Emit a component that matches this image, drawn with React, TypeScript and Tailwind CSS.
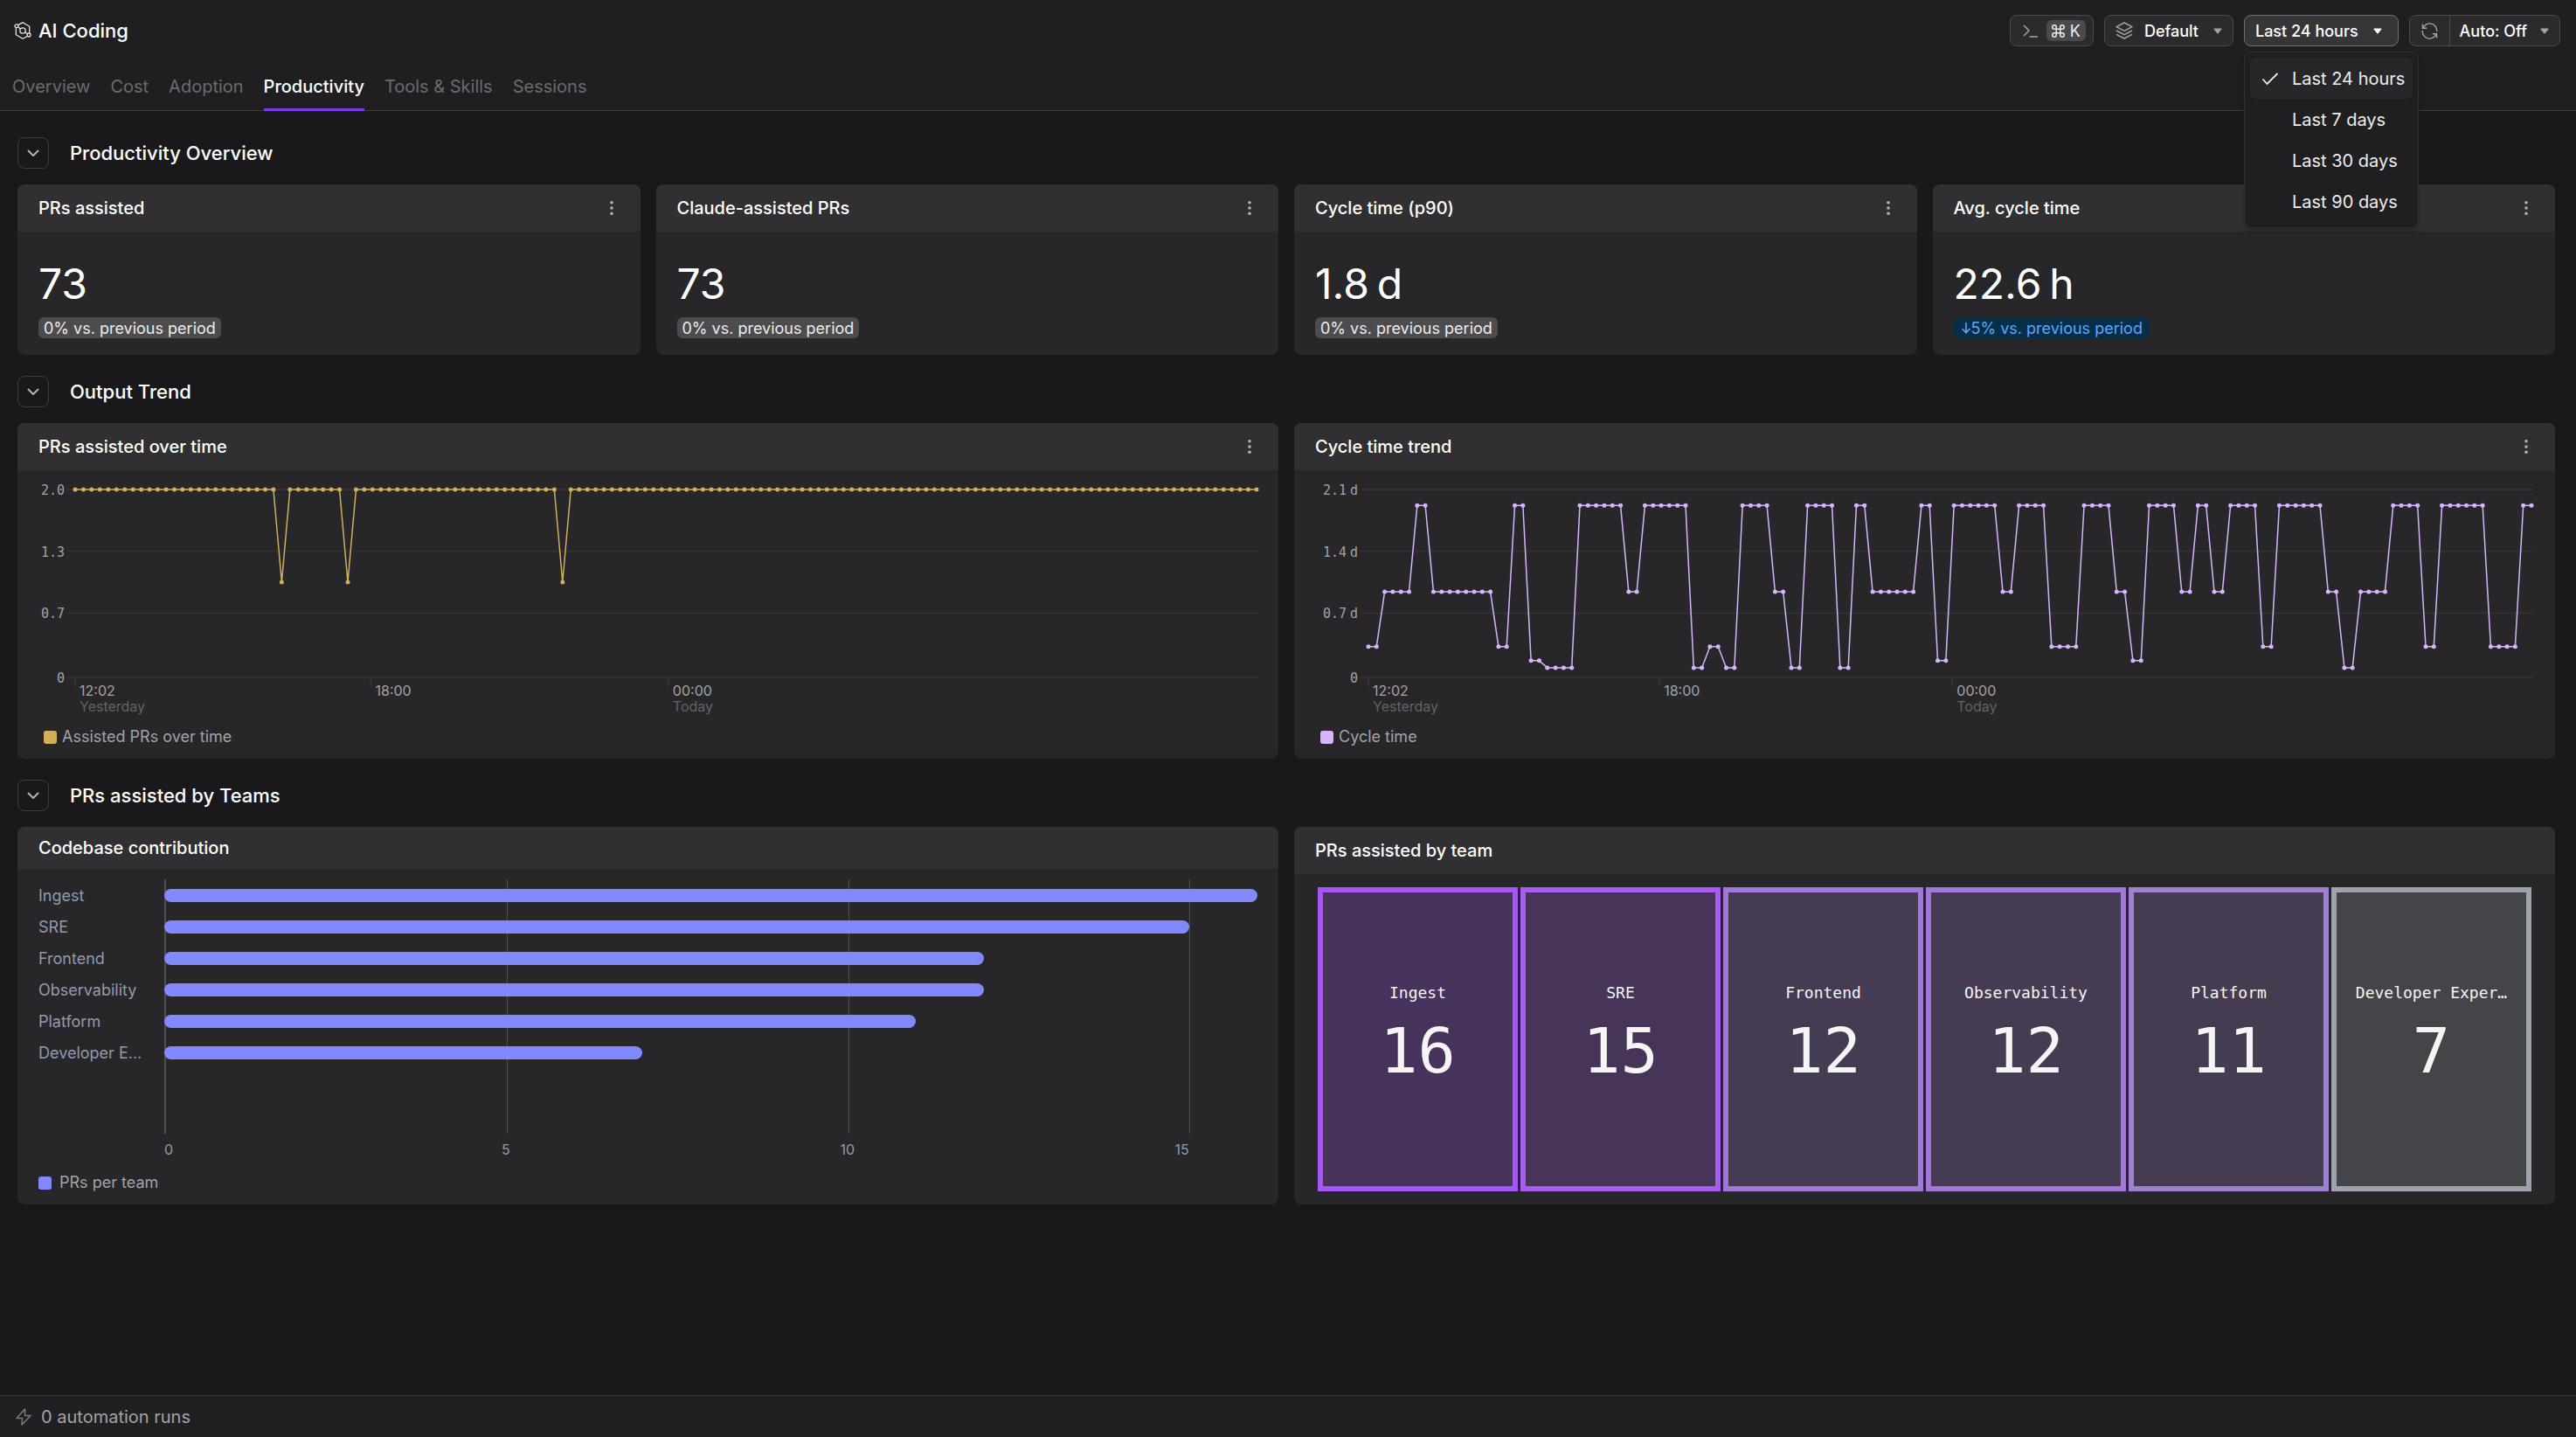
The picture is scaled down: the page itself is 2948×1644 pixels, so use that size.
import type { ReactNode } from 'react';

const TABS = ['Overview', 'Cost', 'Adoption', 'Productivity', 'Tools & Skills', 'Sessions'];
const RANGES = ['Last 24 hours', 'Last 7 days', 'Last 30 days', 'Last 90 days'];

interface Stat {
  title: string;
  value: string;
  delta: string;
  trend: 'flat' | 'down';
}

const STATS: Stat[] = [
  { title: 'PRs assisted', value: '73', delta: '0% vs. previous period', trend: 'flat' },
  { title: 'Claude-assisted PRs', value: '73', delta: '0% vs. previous period', trend: 'flat' },
  { title: 'Cycle time (p90)', value: '1.8\u2009d', delta: '0% vs. previous period', trend: 'flat' },
  { title: 'Avg. cycle time', value: '22.6\u2009h', delta: '5% vs. previous period', trend: 'down' },
];

interface Team {
  name: string;
  prs: number;
  tile: string;
}

const TEAMS: Team[] = [
  { name: 'Ingest', prs: 16, tile: 'border-[#a855f7] bg-[#47325b]' },
  { name: 'SRE', prs: 15, tile: 'border-[#a65cee] bg-[#463459]' },
  { name: 'Frontend', prs: 12, tile: 'border-[#a277d9] bg-[#453b53]' },
  { name: 'Observability', prs: 12, tile: 'border-[#a277d9] bg-[#453b53]' },
  { name: 'Platform', prs: 11, tile: 'border-[#a07ed0] bg-[#453c51]' },
  { name: 'Developer Experience', prs: 7, tile: 'border-[#9ca3af] bg-[#444548]' },
];

// [value, repeat] runs, one sample every ten minutes
const PR_RUNS: [number, number][] = [
  [2, 25], [1, 1], [2, 7], [1, 1], [2, 25], [1, 1], [2, 84],
];

const CYCLE_RUNS: [number, number][] = [
  [0.32, 2], [0.94, 4], [1.92, 2], [0.94, 8], [0.32, 2], [1.92, 2], [0.16, 2], [0.08, 4],
  [1.92, 6], [0.94, 2], [1.92, 6], [0.08, 2], [0.32, 2], [0.08, 2], [1.92, 4], [0.94, 2],
  [0.08, 2], [1.92, 4], [0.08, 2], [1.92, 2], [0.94, 6], [1.92, 2], [0.16, 2], [1.92, 6],
  [0.94, 2], [1.92, 4], [0.32, 4], [1.92, 4], [0.94, 2], [0.16, 2], [1.92, 4], [0.94, 2],
  [1.92, 2], [0.94, 2], [1.92, 4], [0.32, 2], [1.92, 6], [0.94, 2], [0.08, 2], [0.94, 4],
  [1.92, 4], [0.32, 2], [1.92, 6], [0.32, 4], [1.92, 2],
];

const X_TICKS = [
  { minute: 0, label: '12:02', day: 'Yesterday' },
  { minute: 358, label: '18:00', day: '' },
  { minute: 718, label: '00:00', day: 'Today' },
];

const expand = (runs: [number, number][]) => runs.flatMap(([v, n]) => Array<number>(n).fill(v));

/** Shortens a label so that it has at most `max` characters, dots included. */
function clip(text: string, max: number, dots: string) {
  return text.length > max ? text.slice(0, max - dots.length) + dots : text;
}

export default function App() {
  return (
    <div className="flex min-h-screen flex-col bg-[#19191b] font-['Inter',sans-serif] text-white">
      <Header />
      <main className="flex flex-1 flex-col gap-6 pt-[30px] pr-6 pb-6 pl-5">
        <Section title="Productivity Overview">
          <div className="grid grid-cols-4 gap-[18px]">
            {STATS.map((s) => (
              <StatCard key={s.title} stat={s} />
            ))}
          </div>
        </Section>
        <Section title="Output Trend">
          <div className="grid grid-cols-2 gap-[18px]">
            <Card title="PRs assisted over time" menu>
              <LineChart
                name="PRs assisted over time"
                runs={PR_RUNS}
                max={2}
                yLabels={['2.0', '1.3', '0.7', '0']}
                left={66}
                right={1418}
                color="#d1af5b"
              />
              <Legend swatch="bg-[#d1af5b]" label="Assisted PRs over time" className="gap-1.5 px-[30px] pt-px pb-[13px]" />
            </Card>
            <Card title="Cycle time trend" menu>
              <LineChart
                name="Cycle time trend"
                runs={CYCLE_RUNS}
                max={2.1}
                yLabels={['2.1', '1.4', '0.7', '0']}
                unit="d"
                left={85}
                right={1416}
                color="#d8b4fe"
              />
              <Legend swatch="bg-[#d8b4fe]" label="Cycle time" className="gap-1.5 px-[30px] pt-px pb-[13px]" />
            </Card>
          </div>
        </Section>
        <Section title="PRs assisted by Teams">
          <div className="grid grid-cols-2 gap-[18px]">
            <Card title="Codebase contribution" compact>
              <TeamBars />
            </Card>
            <Card title="PRs assisted by team">
              <div className="grid flex-1 grid-cols-6 gap-[3px] px-[27px] py-[15px]">
                {TEAMS.map((t) => (
                  <div
                    key={t.name}
                    className={`flex min-w-0 flex-col items-center justify-center border-6 pb-1.5 font-['DejaVu_Sans_Mono',monospace] text-[#f5f5f5] ${t.tile}`}
                  >
                    <div className="text-[18px] leading-6 whitespace-nowrap">{clip(t.name, 16, '…')}</div>
                    <div className="pt-2 text-[72px] leading-[92px]">{t.prs}</div>
                  </div>
                ))}
              </div>
            </Card>
          </div>
        </Section>
      </main>
      <footer className="flex h-12 items-center gap-[11px] border-t border-[#3a3a3d] bg-[#202022] px-[18px] text-[20px] text-[#a3a3a5]">
        <BoltIcon />
        0 automation runs
      </footer>
    </div>
  );
}

// ── Header ───────────────────────────────────────────────────────────────────

function Header() {
  return (
    <header className="border-b border-[#3a3a3d] bg-[#1f1f21]">
      <div className="flex h-[70px] items-center justify-between pr-[18px] pl-4">
        <h1 className="flex items-center gap-2 text-[22px] font-medium">
          <LogoIcon />
          AI Coding
        </h1>
        <div className="flex items-center gap-3 text-[18px] font-medium">
          <button
            aria-label="Command palette"
            className="flex h-9 items-center gap-2.5 rounded-lg border border-[#4b4b4e] bg-[#2b2b2d] pr-2 pl-[14px]"
          >
            <TerminalIcon />
            <kbd className="flex h-6 items-center gap-1.5 rounded-md bg-[#4a4a4d] px-1.5 font-['Inter',sans-serif] text-[18px] font-normal text-[#ededed]">
              <CommandIcon />K
            </kbd>
          </button>
          <button className="flex h-9 items-center rounded-lg border border-[#4b4b4e] bg-[#2b2b2d] px-3">
            <LayersIcon />
            <span className="pr-[17px] pl-[13px]">Default</span>
            <Caret className="text-[#a3a3a5]" />
          </button>
          <div className="relative">
            <button
              aria-haspopup="listbox"
              aria-expanded="true"
              className="flex h-9 items-center gap-[17px] rounded-lg border border-[#6f6f73] bg-[#363638] pr-[18px] pl-3"
            >
              Last 24 hours
              <Caret className="text-white" />
            </button>
            <RangeMenu />
          </div>
          <div className="flex h-9 items-center rounded-lg border border-[#4b4b4e] bg-[#2b2b2d]">
            <button aria-label="Refresh" className="flex h-full items-center border-r border-[#4b4b4e] px-[13px]">
              <RefreshIcon />
            </button>
            <button className="flex h-full items-center gap-[15px] pr-3 pl-[11px]">
              Auto: Off
              <Caret className="text-[#a3a3a5]" />
            </button>
          </div>
        </div>
      </div>
      <nav className="flex h-14 gap-[23px] px-[14px] text-[20px] text-[#6b6b6e]">
        {TABS.map((tab) => (
          <a
            key={tab}
            href={`#${tab.toLowerCase()}`}
            className={
              tab === 'Productivity'
                ? '-mb-px border-b-3 border-[#7c3aed] pt-3.5 font-medium text-white'
                : 'pt-3.5'
            }
          >
            {tab}
          </a>
        ))}
      </nav>
    </header>
  );
}

function RangeMenu() {
  return (
    <ul
      role="listbox"
      className="absolute top-[42px] left-0 z-10 w-[200px] rounded-lg border border-[#303033] bg-[#1f1f21] p-1.5 text-[20px] font-normal shadow-lg"
    >
      {RANGES.map((r, i) => (
        <li
          key={r}
          role="option"
          aria-selected={i === 0}
          className={`flex h-[47px] items-center rounded-md pl-[13px] whitespace-nowrap text-[#ededed] ${i === 0 ? 'bg-[#272729]' : ''}`}
        >
          <span className="w-[35px]">{i === 0 && <CheckIcon />}</span>
          {r}
        </li>
      ))}
    </ul>
  );
}

// ── Sections and cards ───────────────────────────────────────────────────────

function Section({ title, children }: { title: string; children: ReactNode }) {
  return (
    <section className="flex flex-col gap-[18px]">
      <div className="flex items-center gap-6">
        <button
          aria-label={`Collapse ${title}`}
          className="flex size-9 items-center justify-center rounded-lg border border-[#3d3d40]"
        >
          <svg viewBox="0 0 16 16" className="size-4 fill-none stroke-[#b4b4b6] stroke-2">
            <path d="M2.5 5.5 8 11l5.5-5.5" strokeLinecap="round" strokeLinejoin="round" />
          </svg>
        </button>
        <h2 className="text-[22px] leading-9 font-medium">{title}</h2>
      </div>
      {children}
    </section>
  );
}

function Card({
  title,
  menu = false,
  compact = false,
  children,
}: {
  title: string;
  menu?: boolean;
  compact?: boolean;
  children: ReactNode;
}) {
  return (
    <article className="flex min-w-0 flex-col overflow-hidden rounded-lg bg-[#272729]">
      <div className={`flex items-center justify-between bg-[#303032] px-6 ${compact ? 'h-12' : 'h-[54px]'}`}>
        <h3 className="text-[20px] font-medium">{title}</h3>
        {menu && (
          <button aria-label={`${title} options`} className="flex w-[18px] justify-center">
            <svg viewBox="0 0 4 18" className="h-[18px] w-1 fill-[#b4b4b6]">
              <circle cx="2" cy="2.8" r="1.8" />
              <circle cx="2" cy="9" r="1.8" />
              <circle cx="2" cy="15.2" r="1.8" />
            </svg>
          </button>
        )}
      </div>
      {children}
    </article>
  );
}

function StatCard({ stat }: { stat: Stat }) {
  const down = stat.trend === 'down';
  return (
    <Card title={stat.title} menu>
      <div className="flex flex-col items-start px-6 pt-[30px] pb-[19px]">
        <div className="text-[48px] leading-[60px]">{stat.value}</div>
        <div
          className={`mt-2 flex h-6 items-center rounded-md text-[18px] ${down ? 'bg-[#082f49] px-2 text-[#60a5fa]' : 'bg-[#4c4c4e] px-1.5 text-[#ededed]'}`}
        >
          {down && (
            <svg viewBox="0 0 12 14" className="h-3.5 w-3 fill-none stroke-current" strokeWidth="1.6">
              <path d="M6 1v11.5M1.5 8 6 12.500 10.500 8" />
            </svg>
          )}
          {stat.delta}
        </div>
      </div>
    </Card>
  );
}

function Legend({ swatch, label, className }: { swatch: string; label: string; className: string }) {
  return (
    <div className={`flex items-center text-[18px] leading-6 text-[#a3a3a5] ${className}`}>
      <span className={`size-[15px] rounded-[3px] ${swatch}`} />
      {label}
    </div>
  );
}

// ── Charts ───────────────────────────────────────────────────────────────────

const TOP = 22;
const ZERO = 234;
const AXIS = 237; // the axis line sits just below the zero level

function LineChart({
  name,
  runs,
  max,
  yLabels,
  unit,
  left,
  right,
  color,
}: {
  name: string;
  runs: [number, number][];
  max: number;
  yLabels: string[];
  unit?: string;
  left: number;
  right: number;
  color: string;
}) {
  const values = expand(runs);
  const step = (right - left) / (values.length - 1);
  const points = values.map((v, i) => ({ x: left + i * step, y: ZERO - (v / max) * (ZERO - TOP) }));

  return (
    <svg viewBox="0 0 1443 292" className="w-full" role="img" aria-label={name}>
      {yLabels.map((label, i) => {
        const last = i === yLabels.length - 1;
        const y = last ? AXIS : TOP + (i * (ZERO - TOP)) / (yLabels.length - 1);
        return (
          <g key={label}>
            <line x1={left - 9} x2={right + 2} y1={y} y2={y} stroke="#303033" strokeWidth="2" />
            <text
              x={left - 12}
              y={y + 6}
              textAnchor="end"
              className="fill-[#a3a3a5] font-['DejaVu_Sans_Mono',monospace] text-[15px]"
            >
              {label}
              {unit && !last && <tspan dx="4">{unit}</tspan>}
            </text>
          </g>
        );
      })}
      {X_TICKS.map((t) => {
        const x = left + (t.minute / 10) * step;
        return (
          <g key={t.label} className="text-[16px]">
            <line x1={x} x2={x} y1={AXIS} y2={AXIS + 10} stroke="#343437" strokeWidth="2" />
            <text x={x + 5} y={AXIS + 21} className="fill-[#a3a3a5]">{t.label}</text>
            <text x={x + 5} y={AXIS + 39} className="fill-[#626265]">{t.day}</text>
          </g>
        );
      })}
      <polyline
        points={points.map((p) => `${p.x},${p.y}`).join(' ')}
        fill="none"
        stroke={color}
        strokeWidth="1.5"
        strokeLinejoin="round"
      />
      {points.map((p, i) => (
        <circle key={i} cx={p.x} cy={p.y} r="2.5" fill={color} />
      ))}
    </svg>
  );
}

function TeamBars() {
  const max = TEAMS[0].prs;
  const at = (v: number) => ({ left: `${(v / max) * 100}%` });
  return (
    <div className="px-6 pt-3 pb-1.5">
      <div className="flex text-[18px] text-[#8f9bb0]">
        <div className="flex w-36 shrink-0 flex-col pt-px">
          {TEAMS.map((t) => (
            <div key={t.name} className="h-9 leading-9">{clip(t.name, 14, '...')}</div>
          ))}
        </div>
        <div className="relative h-[291px] flex-1 border-l-2 border-[#4f4f52]">
          {[5, 10, 15].map((v) => (
            <span key={v} className="absolute inset-y-0 w-px bg-[#4f4f52]" style={at(v)} />
          ))}
          <div className="relative -ml-0.5 flex flex-col gap-[21px] pt-[11px]">
            {TEAMS.map((t) => (
              <div
                key={t.name}
                className="h-[15px] rounded-full bg-[#8289fd]"
                style={{ width: `${(t.prs / max) * 100}%` }}
              />
            ))}
          </div>
        </div>
      </div>
      <div className="relative ml-36 h-9 text-[16px] leading-9 text-[#8f9bb0]">
        <span>0</span>
        <span className="absolute -translate-x-1/2" style={at(5)}>5</span>
        <span className="absolute -translate-x-1/2" style={at(10)}>10</span>
        <span className="absolute -translate-x-full" style={at(15)}>15</span>
      </div>
      <Legend swatch="bg-[#8289fd]" label="PRs per team" className="gap-[9px] pt-2 pb-[7px]" />
    </div>
  );
}

// ── Icons ────────────────────────────────────────────────────────────────────

function Caret({ className }: { className: string }) {
  return (
    <svg viewBox="0 0 10 7" className={`h-[7px] w-2.5 fill-current ${className}`}>
      <path d="M1 .5h8a.6.6 0 0 1 .4 1L5.6 6.2a.8.8 0 0 1-1.2 0L.6 1.5a.6.6 0 0 1 .4-1Z" />
    </svg>
  );
}

function LogoIcon() {
  return (
    <svg viewBox="0 0 20 20" className="size-5 fill-none stroke-[#e5e5e5]" strokeWidth="1.3">
      <path d="M4.6 3.6 10 .8l7.7 4.5v7.6M15.6 16.2 10 19.2l-7.7-4.5V6.6" />
      <circle cx="2.9" cy="4.7" r="1.9" />
      <circle cx="17.1" cy="14.9" r="1.9" />
      <circle cx="10" cy="10" r="3.2" />
      <path d="M4.6 5.8 7.3 8M12.7 12l2.8 1.8" />
    </svg>
  );
}

function TerminalIcon() {
  return (
    <svg viewBox="0 0 17 16" className="h-4 w-[17px] fill-none stroke-[#a3a3a5]" strokeWidth="1.5">
      <path d="M1 2l6 6-6 6M7.5 15H17" />
    </svg>
  );
}

function CommandIcon() {
  return (
    <svg viewBox="2 2 20 20" className="size-[15px] fill-none stroke-current stroke-2">
      <path d="M15 6v12a3 3 0 1 0 3-3H6a3 3 0 1 0 3 3V6a3 3 0 1 0-3 3h12a3 3 0 1 0-3-3" />
    </svg>
  );
}

function LayersIcon() {
  return (
    <svg viewBox="0 0 20 20" className="size-5 fill-none stroke-[#a3a3a5]" strokeWidth="1.5" strokeLinejoin="round">
      <path d="m10 1 9 4.7-9 4.7-9-4.7ZM1 10l9 4.7 9-4.7M1 14.3 10 19l9-4.7" />
    </svg>
  );
}

function RefreshIcon() {
  return (
    <svg viewBox="0 0 20 20" className="size-[19px] fill-none stroke-[#a3a3a5]" strokeWidth="1.5">
      <path d="M1.5 1.5v5h5M2 6.500a8.600 8.600 0 0 1 16.600 4M18.500 18.500v-5h-5M18 13.500a8.600 8.600 0 0 1-16.600-4" />
    </svg>
  );
}

function CheckIcon() {
  return (
    <svg viewBox="0 0 20 16" className="h-4 w-5 fill-none stroke-[#ededed]" strokeWidth="1.8">
      <path d="m1.5 8.500 5 5.500L18.500 2" />
    </svg>
  );
}

function BoltIcon() {
  return (
    <svg viewBox="0 0 18 20" className="h-5 w-[18px] fill-none stroke-[#77777a]" strokeWidth="1.6" strokeLinejoin="round">
      <path d="M10.500 1 1 11.500h6.500L7 19l10-10.500h-6.500Z" />
    </svg>
  );
}
